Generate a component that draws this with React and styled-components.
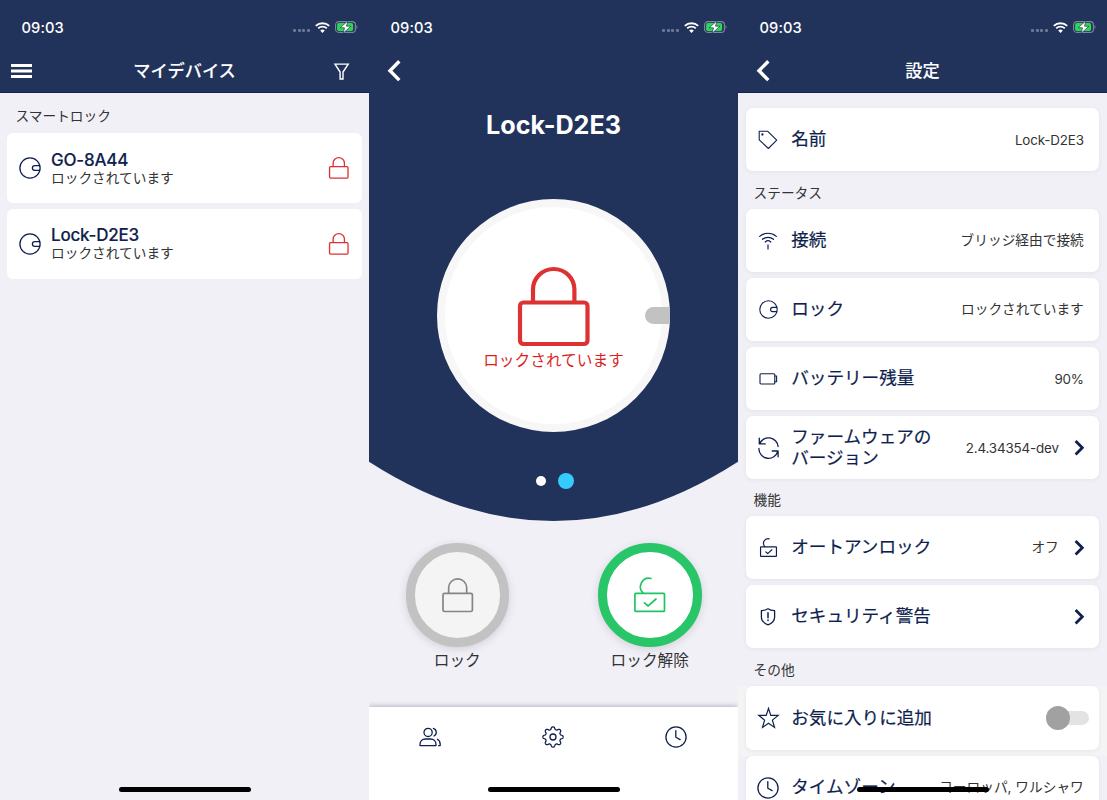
import React from "react";
import styled, { createGlobalStyle, css } from "styled-components";

const navy = "#22335b";
const ink = "#0f1f4e";
const red = "#dc3232";

const Global = createGlobalStyle`
  * { box-sizing: border-box; }
  body {
    margin: 0;
    font-family: Inter, "Noto Sans CJK JP", sans-serif;
    color: #333;
    -webkit-font-smoothing: antialiased;
  }
  svg { display: block; flex: none; overflow: visible; }
`;

const Screens = styled.div`
  display: grid;
  grid-template-columns: repeat(3, 369px);
  width: 1107px;
  height: 800px;
  overflow: hidden;
`;

const Phone = styled.section`
  position: relative;
  display: flex;
  flex-direction: column;
  height: 800px;
  overflow: hidden;
  background: #f1f0f7;
`;

const HomeIndicator = styled.div`
  position: absolute;
  left: 119px;
  bottom: 8px;
  width: 131.5px;
  height: 5px;
  border-radius: 3px;
  background: #000;
`;

const Header = styled.header`
  flex: none;
  height: ${(p) => (p.$plain ? "92px" : "93px")};
  background: ${navy};
  color: #fff;
  ${(p) => !p.$plain && css`border-bottom: 1px solid #14244c;`}
`;

const StatusRow = styled.div`
  display: flex;
  align-items: center;
  height: 54px;
  padding: 0 11px 0 21.5px;
`;

const Time = styled.span`
  flex: 1;
  font-size: 14.7px;
  line-height: 20px;
  font-weight: 500;
  letter-spacing: 0.1px;
  padding-top: 1px;
`;

const Signal = styled.span`
  display: flex;
  gap: 1.7px;
  margin: 7px 5px 0 0;
  i { width: 3px; height: 3px; border-radius: 1px; background: #6b7794; }
`;

const BatteryWrap = styled.span`
  margin-left: 5px;
`;

const NavRow = styled.div`
  display: grid;
  grid-template-columns: 60px 1fr 60px;
  align-items: center;
  height: 34px;
`;

const NavSide = styled.div`
  display: flex;
  justify-content: ${(p) => (p.$end ? "flex-end" : "flex-start")};
  padding: ${(p) => (p.$end ? "0 20.5px 0 0" : p.$menu ? "0 0 0 11px" : "0 0 0 17.5px")};
`;

const NavTitle = styled.h1`
  margin: 0;
  text-align: center;
  font-size: 17.2px;
  line-height: 24px;
  font-weight: 500;
  -webkit-text-stroke: 0.1px currentColor;
`;

const GroupTitle = styled.h2`
  flex: none;
  display: flex;
  align-items: center;
  height: ${(p) => p.$h}px;
  margin: 0;
  padding: ${(p) => p.$top || 0}px 15.5px 0;
  font-size: 13.7px;
  line-height: 20px;
  font-weight: 400;
  color: #333;
`;

const DeviceCard = styled.article`
  flex: none;
  display: flex;
  align-items: center;
  height: 70px;
  margin: 0 7px 5.5px;
  padding: 0 13.5px 0 12px;
  border-radius: 6px;
  background: #fff;
`;

const DeviceText = styled.div`
  flex: 1;
  margin-left: 10px;
`;

const DeviceName = styled.div`
  padding-top: 1px;
  font-size: 17px;
  line-height: 18px;
  font-weight: 500;
  letter-spacing: -0.2px;
  color: ${ink};
  -webkit-text-stroke: 0.15px currentColor;
`;

const DeviceState = styled.div`
  font-size: 13.7px;
  line-height: 18px;
`;

const Hero = styled.div`
  flex: none;
  display: flex;
  flex-direction: column;
  align-items: center;
  height: 521px;
  background: ${navy};
  clip-path: path("M0 0H369V461.7Q184.5 580.3 0 461.7Z");
  > header { align-self: stretch; }
`;

const LockName = styled.h1`
  margin: 18px 0 58px;
  font-size: 25.2px;
  line-height: 31px;
  font-weight: 700;
  color: #fff;
`;

const Dial = styled.div`
  position: relative;
  display: flex;
  flex-direction: column;
  align-items: center;
  width: 233px;
  height: 233px;
  padding-top: 59.5px;
  border: 8px solid #f7f7f7;
  border-radius: 50%;
  background: #fff;
`;

const DialKnob = styled.div`
  position: absolute;
  right: -8px;
  top: 100px;
  width: 25px;
  height: 17px;
  border-radius: 9px 0 0 9px;
  background: #c2c2c2;
`;

const DialLabel = styled.div`
  margin-top: 4px;
  font-size: 15.7px;
  line-height: 22px;
  color: #dc1f1f;
`;

const Pager = styled.div`
  display: flex;
  align-items: center;
  gap: 12.5px;
  height: 16px;
  margin: 41px 0 0 3px;
`;

const PagerDot = styled.i`
  width: ${(p) => (p.$active ? 16 : 10)}px;
  height: ${(p) => (p.$active ? 16 : 10)}px;
  border-radius: 50%;
  background: ${(p) => (p.$active ? "#34ccff" : "#fff")};
`;

const Actions = styled.div`
  flex: 1;
  display: flex;
  justify-content: space-between;
  padding: 22px 36.5px 0 36.5px;
`;

const Action = styled.div`
  display: flex;
  flex-direction: column;
  align-items: center;
  width: 103.5px;
  font-size: 15.7px;
  line-height: 22px;
  white-space: nowrap;
`;

const ActionButton = styled.button`
  display: flex;
  align-items: center;
  justify-content: center;
  width: 103.5px;
  height: 103.5px;
  margin: 0 0 3.5px;
  padding: 0;
  border: 9px solid ${(p) => (p.$active ? "#28c669" : "#c2c2c2")};
  border-radius: 50%;
  background: ${(p) => (p.$active ? "#fff" : "#f4f4f4")};
  box-shadow: 0 2px 9px rgba(60, 30, 50, 0.16);
`;

const TabBar = styled.nav`
  flex: none;
  display: grid;
  grid-template-columns: repeat(3, 1fr);
  justify-items: center;
  align-items: center;
  height: 93px;
  padding: 0 1px 33px 0;
  background: #fff;
  box-shadow: 0 -1px 5px rgba(40, 30, 50, 0.3);
`;

const Settings = styled.div`
  flex: 1;
  padding-top: 15px;
`;

const Band = styled.div`
  padding: 0 7.7px 6px;
  background: ${(p) => (p.$grey ? "#f4f4f4" : "transparent")};
  ${(p) => p.$last && css`padding-bottom: 0;`}
`;

const SettingCard = styled.div`
  display: flex;
  align-items: center;
  height: ${(p) => (p.$tall ? 64 : 63)}px;
  padding: 0 ${(p) => (p.$toggle ? 10 : 15.5)}px 0 11.5px;
  border-radius: 7px;
  background: #fff;
  box-shadow: 0 1px 4px rgba(60, 50, 90, 0.07);
`;

const IconSlot = styled.span`
  display: flex;
  justify-content: center;
  width: 22px;
  margin-right: 12px;
`;

const SettingLabel = styled.span`
  flex: 1;
  padding-bottom: 2px;
  font-size: 17.6px;
  line-height: 21px;
  color: ${ink};
  white-space: pre-line;
  -webkit-text-stroke: 0.2px currentColor;
`;

const SettingValue = styled.span`
  padding-bottom: ${(p) => (p.$latin ? 0 : 1)}px;
  font-size: ${(p) => (p.$latin ? 13.4 : 13.7)}px;
  line-height: 20px;
  letter-spacing: ${(p) => (p.$latin ? "-0.16px" : "0")};
`;

const Chevron = styled.span`
  margin-left: 15px;
`;

const Toggle = styled.span`
  position: relative;
  width: 43.5px;
  height: 14px;
  border-radius: 7px;
  background: #e3e3e3;
  &::before {
    content: "";
    position: absolute;
    left: 0;
    top: -5px;
    width: 24px;
    height: 24px;
    border-radius: 50%;
    background: #a1a1a1;
  }
`;

function Svg({ w, h, vb, sw = 1.3, color = ink, children }) {
  return (
    <svg width={w} height={h} viewBox={vb || `0 0 ${w} ${h}`} fill="none" stroke={color} strokeWidth={sw} strokeLinecap="round" strokeLinejoin="round">
      {children}
    </svg>
  );
}

const PadlockIcon = ({ w, h, sw, color }) => (
  <Svg w={w} h={h} vb="0 0 71.5 79" sw={sw} color={color}>
    <rect x="2" y="35.5" width="67.5" height="41.5" rx="3.5" />
    <path d="M15 35V22.5a20.7 20.5 0 0 1 41.4 0V35" />
  </Svg>
);

const UnlockIcon = ({ w, h, sw, color }) => (
  <Svg w={w} h={h} vb="0 0 31.4 35.4" sw={sw} color={color}>
    <rect x=".9" y="16.4" width="29.6" height="18" rx="1" />
    <path d="M9 16A8.6 8.6 0 0 1 17 1.5M10.5 25.8l3.7 3.2 7.8-7" />
  </Svg>
);

const KnobIcon = ({ size = 22, sw = 1.3 }) => (
  <Svg w={size} h={size} vb="0 0 22 22" sw={sw}>
    <circle cx="11" cy="11" r="10.1" />
    <path d="M20.6 8.6h-4.8a2.4 2.4 0 0 0 0 4.8h4.8" />
  </Svg>
);

const ClockIcon = () => (
  <Svg w={22} h={22}>
    <circle cx="11" cy="11" r="10.1" />
    <path d="M10.8 4.6v6.6l4.3 2.4" />
  </Svg>
);

const BackIcon = () => (
  <Svg w={14} h={22} color="#fff" sw={3.4}>
    <path d="M12.3 1.3L3 10.7l9.3 9.4" strokeLinecap="butt" strokeLinejoin="miter" />
  </Svg>
);

const ForwardIcon = () => (
  <Svg w={10} h={16} sw={2.8}>
    <path d="M1.6 1L8.3 7.8l-6.7 6.8" strokeLinecap="butt" strokeLinejoin="miter" />
  </Svg>
);

const gearPath = (() => {
  let d = "";
  for (let i = 0; i < 160; i++) {
    const t = (i / 160) * Math.PI * 2;
    const r = 8.9 + 1.35 * Math.tanh(1.4 * Math.cos(8 * t));
    d += `${i ? "L" : "M"}${(11 + r * Math.cos(t)).toFixed(2)} ${(11 + r * Math.sin(t)).toFixed(2)}`;
  }
  return d + "Z";
})();

const GearIcon = () => (
  <Svg w={22} h={22}>
    <path d={gearPath} />
    <circle cx="11" cy="11" r="3" />
  </Svg>
);

const UsersIcon = () => (
  <Svg w={22} h={20}>
    <circle cx="9.1" cy="5.4" r="4.1" />
    <path d="M1 18.6v-1.2c0-3.2 2.4-5.4 5.4-5.4h5.2c3 0 5.4 2.2 5.4 5.4v1.2zM14.4 1.4c3.6 1.2 3.8 6 .6 7.6M18.4 12.3c1.7 1 2.8 2.9 2.8 5.1v1.2h-1.6" />
  </Svg>
);

const TagIcon = () => (
  <Svg w={20} h={20} sw={1.1}>
    <path d="M1.2 1.3h8.6l8.9 8.9-8.3 8.3-9.2-8.7z" />
    <circle cx="4.4" cy="4.5" r=".6" />
  </Svg>
);

const AntennaIcon = () => (
  <Svg w={20} h={18} sw={1.2}>
    <path d="M1.7 4.4c4.6-4.2 12-4.2 16.6 0M4.5 7.3c3-2.7 8-2.7 11 0M7.3 10c1.5-1.4 3.9-1.4 5.4 0M10 12.8V17" />
  </Svg>
);

const CellIcon = () => (
  <Svg w={19} h={12} sw={1.1}>
    <rect x="1" y=".8" width="14.8" height="10.2" rx="1" />
    <path d="M15.8 3h1.8v5.8h-1.8" />
  </Svg>
);

const SyncIcon = () => (
  <Svg w={21} h={21} sw={1.3}>
    <path d="M1.3 1.1v5.8h5.9M1.6 6.9A9.6 9.6 0 0 1 20.1 9.5M20.1 19.8V14h-5.9M19.8 14.1A9.6 9.6 0 0 1 .9 11.5" />
  </Svg>
);

const ShieldIcon = () => (
  <Svg w={16} h={18} sw={1.3}>
    <path d="M8 .8C9.8 2 12 2.6 14.6 2.7v6.5c0 3.4-2.5 6-6.6 7.6-4.1-1.6-6.6-4.2-6.6-7.6V2.7C4 2.6 6.2 2 8 .8z" />
    <path d="M8 4.8v5M8 12.1v.4" strokeWidth="1.5" />
  </Svg>
);

const StarIcon = () => (
  <Svg w={21} h={22} sw={1.2}>
    <path strokeLinejoin="miter" d="M10.5 1.5l2.3 6.9h7.4l-5.8 4.7 2.1 7.3-6-4.2-6 4.2 2.1-7.3L.8 8.4h7.4z" />
  </Svg>
);

const MenuIcon = () => (
  <Svg w={21} h={14} color="#fff" sw={3}>
    <path strokeLinecap="butt" d="M0 1.6h21M0 7h21M0 12.4h21" />
  </Svg>
);

const FilterIcon = () => (
  <Svg w={15} h={17} color="#fff" sw={1.4}>
    <path strokeLinejoin="miter" d="M1 1.1h13.2L9 9v7H6.1V9z" />
  </Svg>
);

const WifiIcon = () => (
  <svg width="15" height="11" viewBox="0 0 15 11" fill="none" stroke="#fff" strokeWidth="1.9">
    <path d="M.8 3.9a9.6 9.6 0 0 1 13.4 0M3.2 6.4a6.2 6.2 0 0 1 8.6 0" />
    <path d="M7.5 11L5.2 8.6a3.3 3.3 0 0 1 4.6 0z" fill="#fff" stroke="none" />
  </svg>
);

const BatteryIcon = () => (
  <svg width="23" height="12" viewBox="0 0 23 12">
    <rect x=".6" y=".6" width="19.8" height="10.8" rx="3.2" fill="none" stroke="#7d87a0" strokeWidth="1.1" />
    <rect x="2.1" y="2.1" width="16" height="7.8" rx="1.7" fill="#2fd651" />
    <path d="M21.5 4v4c1.3-.6 1.3-3.4 0-4z" fill="#7d87a0" />
    <path d="M12.9-.2L5.2 6.8h4.3L8.2 12.2l7.7-7h-4.4z" fill="#fff" stroke={navy} strokeWidth=".7" />
  </svg>
);

const StatusBar = () => (
  <StatusRow>
    <Time>09:03</Time>
    <Signal><i /><i /><i /><i /></Signal>
    <WifiIcon />
    <BatteryWrap><BatteryIcon /></BatteryWrap>
  </StatusRow>
);

const Device = ({ name }) => (
  <DeviceCard>
    <KnobIcon />
    <DeviceText>
      <DeviceName>{name}</DeviceName>
      <DeviceState>ロックされています</DeviceState>
    </DeviceText>
    <PadlockIcon w={19.6} h={21.6} sw={4.8} color={red} />
  </DeviceCard>
);

const Setting = ({ icon, label, value, latin, arrow, toggle, grey, last }) => (
  <Band $grey={grey} $last={last}>
    <SettingCard $tall={grey} $toggle={toggle}>
      <IconSlot>{icon}</IconSlot>
      <SettingLabel>{label}</SettingLabel>
      {value && <SettingValue $latin={latin}>{value}</SettingValue>}
      {arrow && <Chevron><ForwardIcon /></Chevron>}
      {toggle && <Toggle />}
    </SettingCard>
  </Band>
);

const DevicesScreen = () => (
  <Phone>
    <Header>
      <StatusBar />
      <NavRow>
        <NavSide $menu><MenuIcon /></NavSide>
        <NavTitle>マイデバイス</NavTitle>
        <NavSide $end><FilterIcon /></NavSide>
      </NavRow>
    </Header>
    <GroupTitle $h={40} $top={6}>スマートロック</GroupTitle>
    <Device name="GO-8A44" />
    <Device name="Lock-D2E3" />
    <HomeIndicator />
  </Phone>
);

const LockScreen = () => (
  <Phone>
    <Hero>
      <Header $plain>
        <StatusBar />
        <NavRow>
          <NavSide><BackIcon /></NavSide>
        </NavRow>
      </Header>
      <LockName>Lock-D2E3</LockName>
      <Dial>
        <PadlockIcon w={71.5} h={79} sw={4.2} color={red} />
        <DialLabel>ロックされています</DialLabel>
        <DialKnob />
      </Dial>
      <Pager><PagerDot /><PagerDot $active /></Pager>
    </Hero>
    <Actions>
      <Action>
        <ActionButton><PadlockIcon w={31.4} h={34.4} sw={3.9} color="#858589" /></ActionButton>
        ロック
      </Action>
      <Action>
        <ActionButton $active><UnlockIcon w={31.4} h={35.4} sw={1.7} color="#1fc463" /></ActionButton>
        ロック解除
      </Action>
    </Actions>
    <TabBar><UsersIcon /><GearIcon /><ClockIcon /></TabBar>
    <HomeIndicator />
  </Phone>
);

const SettingsScreen = () => (
  <Phone>
    <Header>
      <StatusBar />
      <NavRow>
        <NavSide><BackIcon /></NavSide>
        <NavTitle>設定</NavTitle>
      </NavRow>
    </Header>
    <Settings>
      <Setting last latin icon={<TagIcon />} label="名前" value="Lock-D2E3" />
      <GroupTitle $h={38} $top={5}>ステータス</GroupTitle>
      <Setting icon={<AntennaIcon />} label="接続" value="ブリッジ経由で接続" />
      <Setting icon={<KnobIcon size={19} />} label="ロック" value="ロックされています" />
      <Setting latin icon={<CellIcon />} label="バッテリー残量" value="90%" />
      <Setting last latin arrow icon={<SyncIcon />} label={"ファームウェアの\nバージョン"} value="2.4.34354-dev" />
      <GroupTitle $h={37} $top={5}>機能</GroupTitle>
      <Setting arrow icon={<UnlockIcon w={17} h={19} sw={2.2} color={ink} />} label="オートアンロック" value="オフ" />
      <Setting last arrow icon={<ShieldIcon />} label="セキュリティ警告" />
      <GroupTitle $h={38} $top={5}>その他</GroupTitle>
      <Setting grey toggle icon={<StarIcon />} label="お気に入りに追加" />
      <Setting last icon={<ClockIcon />} label="タイムゾーン" value="ヨーロッパ, ワルシャワ" />
    </Settings>
    <HomeIndicator />
  </Phone>
);

export default function App() {
  return (
    <>
      <Global />
      <Screens>
        <DevicesScreen />
        <LockScreen />
        <SettingsScreen />
      </Screens>
    </>
  );
}
